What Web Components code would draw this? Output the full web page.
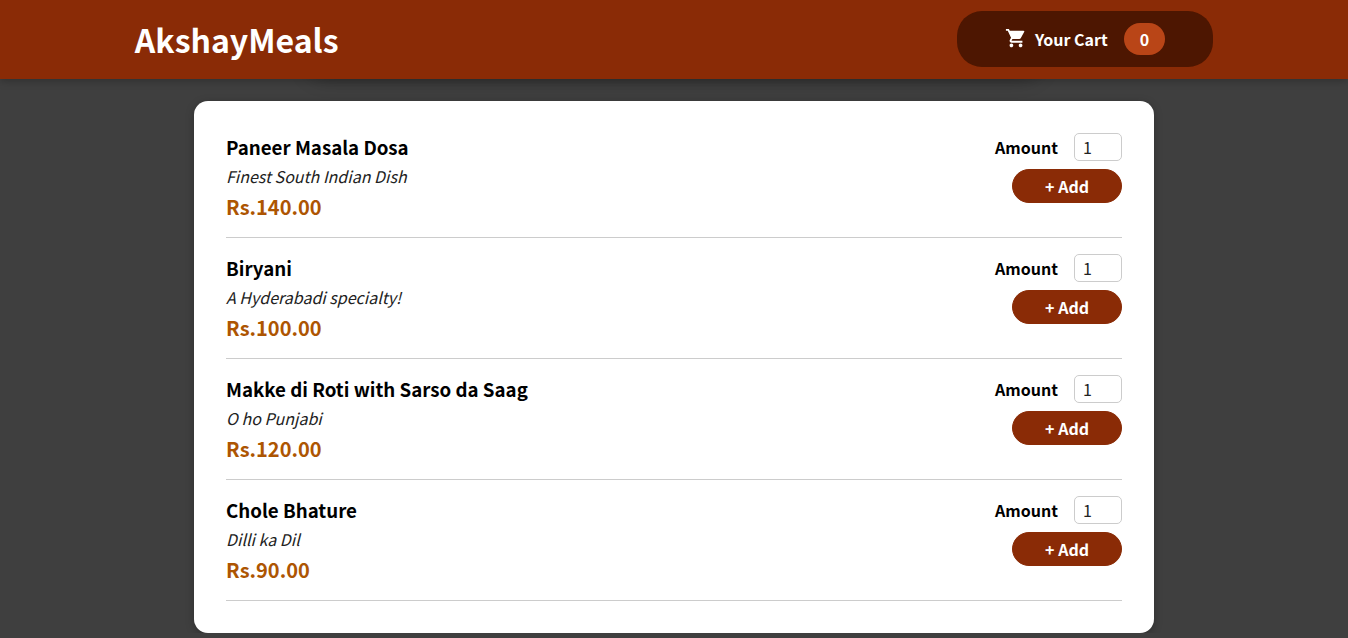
<!DOCTYPE html>
<html lang="en">
<head>
<meta charset="utf-8">
<meta name="viewport" content="width=device-width, initial-scale=1">
<title>AkshayMeals</title>
<style>
  html { font-family: "Noto Sans CJK JP", "Noto Sans", sans-serif; font-size: 16px; }
  body { margin: 0; background: #3f3f3f; color: #000; }
</style>
</head>
<body>
<meals-app></meals-app>
<script>
class BaseElement extends HTMLElement {
  render(html) {
    const t = document.createElement('template');
    t.innerHTML = html;
    this.attachShadow({ mode: 'open' }).append(t.content.cloneNode(true));
  }
}

customElements.define('cart-button', class extends BaseElement {
  connectedCallback() {
    this.render(`
      <style>
        :host { display: block; }
        button {
          display: flex; align-items: center; justify-content: space-around;
          box-sizing: border-box; height: 56px; padding: 12px 48px;
          border: 0; border-radius: 25px; background: #4d1601; color: #fff;
          font: bold 16px/24px "Noto Sans CJK JP", "Noto Sans", sans-serif; cursor: pointer;
        }
        svg { width: 22px; height: 22px; margin-right: 8px; fill: #fff; }
        .badge {
          margin-left: 16px; padding: 4px 16px; border-radius: 25px; background: #b94517;
        }
      </style>
      <button type="button">
        <svg viewBox="0 1 24 24" aria-hidden="true"><path d="M7 18c-1.100 0-1.990.9-1.990 2S5.900 22 7 22s2-.9 2-2-.9-2-2-2zM1 2v2h2l3.600 7.590-1.350 2.450c-.16.28-.25.61-.25.96 0 1.100.9 2 2 2h12v-2H7.420c-.14 0-.25-.11-.25-.25l.03-.12.9-1.630h7.450c.75 0 1.410-.41 1.750-1.030l3.580-6.490A1 1 0 0020 4H5.210l-.94-2H1zm16 16c-1.100 0-1.990.9-1.990 2s.89 2 1.990 2 2-.9 2-2-.9-2-2-2z"/></svg>
        <span><slot></slot></span>
        <span class="badge">${this.getAttribute('count')}</span>
      </button>`);
  }
});

customElements.define('site-header', class extends BaseElement {
  connectedCallback() {
    this.render(`
      <style>
        :host { display: block; position: sticky; top: 0; z-index: 10; }
        header {
          display: flex; align-items: center; justify-content: space-between;
          padding: 11px 10% 12px;
          background: #8a2b06; color: #fff; box-shadow: 0 2px 8px rgba(0,0,0,.25);
        }
        h1 { margin: 0; font-size: 32px; line-height: 48px; }
      </style>
      <header><h1><slot></slot></h1><cart-button count="0">Your Cart</cart-button></header>`);
  }
});

customElements.define('meal-item', class extends BaseElement {
  connectedCallback() {
    const id = this.getAttribute('meal-id');
    this.render(`
      <style>
        :host {
          display: flex; justify-content: space-between;
          margin: 16px; padding-bottom: 14px; border-bottom: 1px solid #ccc;
        }
        h3 { margin: 0; line-height: 28px; }
        .description { line-height: 30px; font-style: italic; color: #222; }
        .price { font-size: 20px; line-height: 32px; font-weight: bold; color: #ad5502; }
        form { display: flex; flex-direction: column; align-items: flex-end; gap: 8px; }
        .field { display: flex; align-items: center; gap: 16px; }
        label { font-size: 16px; line-height: 24px; font-weight: bold; }
        input, button { font-family: "Noto Sans CJK JP", "Noto Sans", sans-serif; }
        input {
          box-sizing: border-box; width: 48px; height: 28px; padding: 0 0 0 8px;
          border: 1px solid #ccc; border-radius: 5px; background: #fff; color: #222;
          font-size: 16px; appearance: textfield;
        }
        input::-webkit-inner-spin-button { appearance: none; margin: 0; }
        button {
          padding: 4px 32px; border: 1px solid #8a2b06; border-radius: 20px;
          background: #8a2b06; color: #fff; font-size: 16px; line-height: 24px;
          font-weight: bold; cursor: pointer;
        }
      </style>
      <div>
        <h3>${this.getAttribute('name')}</h3>
        <div class="description"><slot></slot></div>
        <div class="price">${this.getAttribute('price')}</div>
      </div>
      <form>
        <div class="field">
          <label for="amount-${id}">Amount</label>
          <input id="amount-${id}" type="number" min="1" max="5" step="1" value="1">
        </div>
        <button type="button">+ Add</button>
      </form>`);
  }
});

customElements.define('meal-card', class extends BaseElement {
  connectedCallback() {
    this.render(`
      <style>
        :host {
          display: flow-root; box-sizing: border-box; width: 90%; max-width: 960px;
          margin: 32px auto 0; padding: 16px; border-radius: 14px; background: #fff;
          box-shadow: 0 2px 8px rgba(0,0,0,.25);
        }
      </style>
      <slot></slot>`);
  }
});

customElements.define('meals-app', class extends BaseElement {
  connectedCallback() {
    this.render(`
      <style>
        :host { display: block; }
        /* Summary panel tucked under the sticky header. */
        .summary {
          width: 90%; max-width: 720px; height: 60px; margin: -70px auto 0;
          border-radius: 14px; background: #383838;
          box-shadow: 0 1px 18px 10px rgba(0,0,0,.25);
        }
      </style>
      <site-header>AkshayMeals</site-header>
      <main>
        <div class="summary"></div>
        <meal-card>
          <meal-item meal-id="m1" name="Paneer Masala Dosa" price="Rs.140.00">Finest South Indian Dish</meal-item>
          <meal-item meal-id="m2" name="Biryani" price="Rs.100.00">A Hyderabadi specialty!</meal-item>
          <meal-item meal-id="m3" name="Makke di Roti with Sarso da Saag" price="Rs.120.00">O ho Punjabi</meal-item>
          <meal-item meal-id="m4" name="Chole Bhature" price="Rs.90.00">Dilli ka Dil</meal-item>
        </meal-card>
      </main>`);
  }
});
</script>
</body>
</html>
